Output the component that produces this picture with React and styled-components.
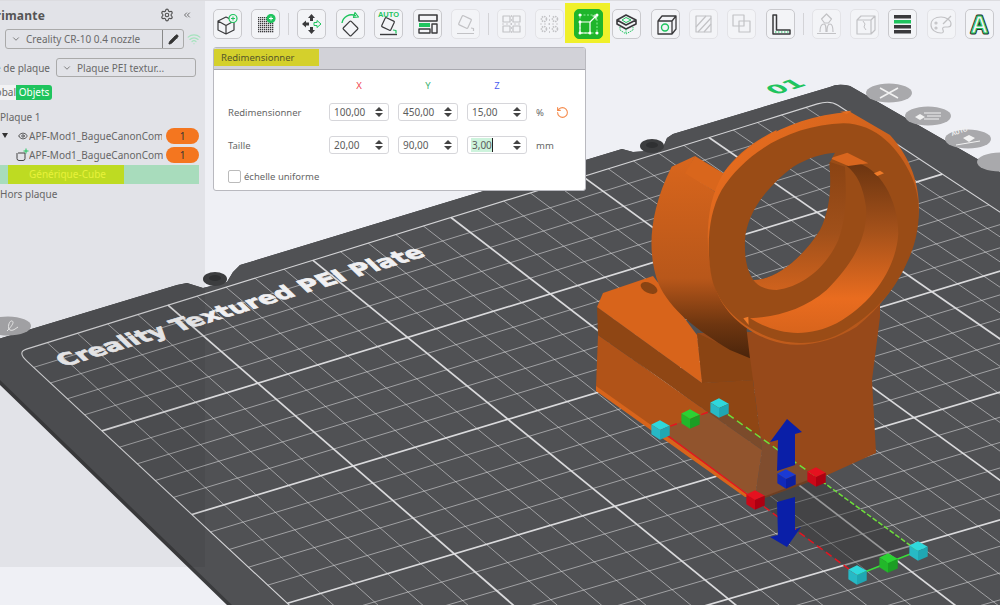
import React from "react";
import styled, { createGlobalStyle } from "styled-components";
import { Settings, ChevronsLeft, ChevronDown, Pencil, Wifi, Eye, RotateCcw } from "lucide-react";

const GREEN = "#1fc45e";

const GlobalStyle = createGlobalStyle`
  html, body {
    margin: 0;
    padding: 0;
    background: #eff0f5;
    overflow: hidden;
  }
  * { box-sizing: border-box; }
`;

const Page = styled.div`
  position: relative;
  width: 1000px;
  height: 605px;
  overflow: hidden;
  display: flex;
  align-items: flex-start;
  border-top: 1px solid #dcdce0;
  background: #eff0f5;
  font-family: "Noto Sans", "Liberation Sans", sans-serif;
  font-size: 10px;
  color: #666;
`;

const SceneSvg = styled.svg`
  position: absolute;
  left: 0;
  top: -1px;
  width: 1000px;
  height: 605px;
`;

const Sidebar = styled.aside`
  position: relative;
  flex: 0 0 205px;
  height: 566px;
  background: rgba(0, 0, 0, 0.05);
  overflow: hidden;
`;

const SideHeader = styled.div`
  display: flex;
  align-items: center;
  height: 28px;
  color: #555;
`;

const Clipped = styled.div`
  display: flex;
  justify-content: flex-end;
  flex: 0 0 ${(p) => p.$w}px;
  overflow: hidden;
  white-space: nowrap;
`;

const Title = styled(Clipped)`
  font-size: 12px;
  font-weight: 700;
  letter-spacing: 0.2px;
  color: #555;
`;

const HeaderTools = styled.div`
  margin-left: 115px;
  display: flex;
  align-items: center;
  gap: 8px;
`;

const PrinterRow = styled.div`
  display: flex;
  align-items: center;
  margin-left: 5px;
  height: 20px;
`;

const Combo = styled.div`
  display: flex;
  align-items: center;
  height: 100%;
  width: ${(p) => p.$w}px;
  border: 1px solid #aaa;
  border-radius: 3px;
  padding-left: 5px;
  gap: 5px;
  white-space: nowrap;
  color: #6a6a6a;
`;

const EditButton = styled.div`
  margin-left: auto;
  width: 21px;
  height: 100%;
  border-left: 1px solid #888;
  display: flex;
  align-items: center;
  justify-content: center;
  color: #333;
`;

const WifiMark = styled(Wifi)`
  margin-left: 3px;
  color: #a5e3bd;
`;

const PlateRow = styled.div`
  display: flex;
  align-items: center;
  gap: 6px;
  margin-top: 9px;
  height: 19px;
`;

const Tabs = styled.div`
  display: flex;
  margin-top: 8px;
  height: 15px;
  width: 52px;
  line-height: 15px;
`;

const TabGlobal = styled(Clipped)`
  background: #f2f2f4;
`;

const TabActive = styled.div`
  flex: 1;
  background: #1fc45e;
  color: #fff;
  text-align: center;
  border-radius: 0 3px 3px 0;
`;

const Tree = styled.div`
  margin-top: 7px;
`;

const TreeRow = styled.div`
  position: relative;
  display: flex;
  align-items: center;
  height: 19.25px;
  width: 199px;
  padding-left: ${(p) => p.$indent || 0}px;
  background: ${(p) => (p.$selected ? "#a8dcbc" : "transparent")};
  white-space: nowrap;
`;

const Marker = styled.span`
  position: absolute;
  left: 8px;
  top: 0;
  width: 116px;
  height: 100%;
  background: #bedb22;
`;

const TreeName = styled.span`
  position: relative;
  flex: none;
  width: ${(p) => p.$w || 133}px;
  overflow: hidden;
  color: ${(p) => p.$color || "#666"};
`;

const Badge = styled.span`
  margin-left: auto;
  width: 33px;
  height: 16px;
  line-height: 16px;
  border-radius: 8px;
  background: #f4761f;
  color: #333;
  text-align: center;
`;

const Caret = styled.span`
  margin: 0 10px 0 2px;
  width: 0;
  height: 0;
  border-left: 3px solid transparent;
  border-right: 3px solid transparent;
  border-top: 5px solid #333;
`;

const Main = styled.main`
  position: relative;
  flex: 1;
  min-width: 0;
`;

const Toolbar = styled.div`
  display: flex;
  align-items: center;
  gap: 9.4px;
  padding: 7px 0 0 8px;
  height: 38px;
  isolation: isolate;
`;

const Separator = styled.span`
  flex: 0 0 1px;
  height: 22px;
  margin: 0 -1.4px;
  background: #d3d3d7;
`;

const ToolButton = styled.div`
  position: relative;
  flex: 0 0 29px;
  height: 30px;
  border-radius: 5px;
  border: 1px solid ${(p) => (p.$active ? "#1fb52b" : p.$muted ? "#e3e3e7" : "#c9c9cd")};
  background: ${(p) => (p.$active ? "#1fb52b" : "#f3f4f7")};
  color: ${(p) => (p.$active ? "#fff" : p.$muted ? "#c2c2c5" : "#3a3a3c")};
  svg { display: block; margin: -1px; }
  ${(p) =>
    p.$active &&
    `&::before {
      content: "";
      position: absolute;
      left: -10px;
      right: -8px;
      top: -7px;
      bottom: -5px;
      background: #f0f02a;
      z-index: -1;
    }`}
`;

const Panel = styled.section`
  margin: 8px 0 0 8px;
  width: 373px;
  height: 144px;
  background: #fff;
  border: 1px solid #b9b9bf;
  border-radius: 3px;
  overflow: hidden;
  font-size: 9.5px;
`;

const PanelHeader = styled.div`
  height: 22px;
  background: #d2d2d8;
  border-bottom: 1px solid #a9a9b0;
  padding-top: 1px;
`;

const PanelTitle = styled.div`
  width: 105px;
  height: 17px;
  line-height: 17px;
  padding-left: 7px;
  background: #d4d02c;
  color: #55552a;
`;

const PanelGrid = styled.div`
  display: grid;
  grid-template-columns: 92px 60px 60px 60px 17px 20px;
  column-gap: 9px;
  row-gap: 15px;
  align-items: center;
  padding: 14px 0 0 14px;
`;

const Axis = styled.div`
  text-align: center;
  color: ${(p) => p.$color};
  height: 4px;
  line-height: 4px;
`;

const FieldLabel = styled.div`
  color: #666;
`;

const Field = styled.div`
  display: flex;
  align-items: center;
  justify-content: space-between;
  height: 18px;
  padding: 0 4px;
  border: 1px solid #d6d6da;
  border-radius: 3px;
  color: #5c5c5c;
  font-size: 10px;
`;

const Spinner = styled.span`
  display: flex;
  flex-direction: column;
  gap: 2px;
  margin-right: 1px;
  &::before, &::after {
    content: "";
    width: 0;
    height: 0;
    border-left: 4px solid transparent;
    border-right: 4px solid transparent;
  }
  &::before { border-bottom: 4px solid #444; }
  &::after { border-top: 4px solid #444; }
`;

const Selected = styled.span`
  background: #cdf3dc;
  border-right: 1px solid #222;
  margin-left: -1px;
  padding-left: 1px;
`;

const Unit = styled.div`
  color: #666;
  white-space: nowrap;
`;

const ResetIcon = styled(RotateCcw)`
  margin-left: -6px;
  color: #f58b4c;
`;

const Uniform = styled.label`
  display: flex;
  align-items: center;
  gap: 3px;
  margin: 16px 0 0 14px;
  color: #666;
`;

const CheckBox = styled.span`
  width: 13px;
  height: 13px;
  border: 1px solid #bbb;
  border-radius: 2px;
  background: #fff;
`;

// --- toolbar glyphs, drawn in a 29x30 box ---
const Glyph = ({ children }) => (
  <svg width="29" height="30" viewBox="0 0 29 30" fill="none" stroke="currentColor" strokeWidth="1.2" strokeLinejoin="round">
    {children}
  </svg>
);

const PlusDot = ({ filled }) => (
  <g>
    <circle cx="20" cy="9.5" r="4" fill={filled ? GREEN : "#f3f4f7"} stroke={GREEN} />
    <path d="M18 9.5h4M20 7.5v4" stroke={filled ? "#fff" : GREEN} strokeWidth="1" />
  </g>
);

const GridFill = () => {
  const bars = [8.5, 10.5, 12.5, 14.5, 16.5, 18.5, 20.5, 22.5];
  return (
    <g>
      <rect x="7" y="8" width="16" height="16" fill="#3a3a3c" stroke="none" />
      {bars.map((b) => (
        <path key={b} d={`M${b} 8v16M7 ${b + 1}h16`} stroke="#f3f4f7" strokeWidth="0.7" />
      ))}
    </g>
  );
};

const tools = [
  { icon: <><path d="M5 12l8-4 8 4v9l-8 4-8-4zM5 12l8 4.5 8-4.5M13 16.5V25" /><PlusDot /></> },
  { icon: <><GridFill /><PlusDot filled /></> },
  { sep: true },
  { icon: <>
    <path d="M14.5 5l3.5 4h-2v3h-3V9h-2zM14.5 25l3.5-4h-2v-3h-3v3h-2zM5 15l4-3.5v2h3v3H9v2z" fill="currentColor" stroke="none" />
    <path d="M24 15l-4-3.5v2h-3v3h3v2z" fill="#f3f4f7" stroke={GREEN} strokeWidth="1" />
  </> },
  { icon: <>
    <rect x="9" y="14" width="11" height="11" rx="1" transform="rotate(45 14.5 19.5)" />
    <path d="M6 14a9.500 9.500 0 0 1 14-7" stroke={GREEN} strokeWidth="1.4" />
    <path d="M19 3.500l3.500 4.500-5 .5z" stroke={GREEN} />
  </> },
  { icon: <>
    <text x="14.5" y="7.5" fontSize="7.500" fontWeight="700" textAnchor="middle" fill={GREEN} stroke="none" fontFamily="Liberation Sans">AUTO</text>
    <rect x="9" y="10" width="10" height="10" rx="1" transform="rotate(25 14 15)" />
    <path d="M6 25.500h17" strokeWidth="1.4" />
    <path d="M19 21l3 .5v3" stroke={GREEN} />
  </> },
  { icon: <>
    <rect x="6" y="6" width="18" height="6" strokeWidth="1.6" />
    <rect x="6" y="14" width="11" height="4" fill={GREEN} stroke="none" />
    <rect x="6" y="20" width="11" height="4" strokeWidth="1.4" />
    <rect x="19" y="15" width="5" height="9" strokeWidth="1.4" />
  </> },
  { muted: true, icon: <>
    <rect x="9" y="8" width="10" height="10" rx="1" transform="rotate(25 14 13)" />
    <path d="M6 24.500h17M20 19l2.500 .5v2.500" />
  </> },
  { sep: true },
  { muted: true, icon: <>
    <rect x="6" y="7" width="7" height="6" /><rect x="16" y="7" width="7" height="6" />
    <rect x="6" y="17" width="7" height="6" /><rect x="16" y="17" width="7" height="6" />
    <path d="M14.500 6v18M5 15h19" strokeDasharray="2 2" strokeWidth="0.8" />
  </> },
  { muted: true, icon: <>
    {[[9, 10], [20, 10], [9, 20], [20, 20]].map(([x, y]) => (
      <circle key={`${x}-${y}`} cx={x} cy={y} r="2.500" strokeWidth="1.6" strokeDasharray="1.500 .8" />
    ))}
    <path d="M14.500 6v18M5 15h19" strokeDasharray="2 2" strokeWidth="0.8" />
  </> },
  { active: true, icon: <>
    <rect x="6" y="6" width="17" height="18" stroke="#8ff09a" strokeDasharray="2 1.500" strokeWidth="1" />
    <rect x="6" y="13" width="10" height="11" stroke="#fff" />
    <path d="M16 13l6-6M18.500 7H22v3.500" stroke="#fff" />
    {[[6, 6], [23, 6], [6, 24], [23, 24], [16, 24], [6, 13]].map(([x, y]) => (
      <circle key={`${x}-${y}`} cx={x} cy={y} r="1.500" fill="#fff" stroke="none" />
    ))}
  </> },
  { icon: <>
    <path d="M5 11l9-5 10 5-10 5zM5 11v4l9 5 10-5v-4" strokeWidth="1.6" />
    <path d="M10 11l4-2.500 5 2.500-5 2.500z" stroke={GREEN} strokeWidth="1" />
    <path d="M8 18v3l6 4 7-4v-3M14 20v5" stroke={GREEN} strokeDasharray="1.500 1" strokeWidth="1" />
  </> },
  { icon: <>
    <path d="M7 12h14v13H7zM7 12l4-5h14l-4 5M21 25l4-5V7" strokeWidth="1.3" />
    <circle cx="14" cy="18.500" r="3.500" stroke={GREEN} strokeWidth="1.4" />
  </> },
  { muted: true, icon: <>
    <rect x="7" y="7" width="15" height="16" />
    <path d="M7 18l10-11M9 23L22 9M15 23l7-8" />
  </> },
  { muted: true, icon: <>
    <rect x="6" y="6" width="11" height="11" /><rect x="12" y="12" width="11" height="11" />
  </> },
  { icon: <>
    <path d="M7 6h3.500v15H24v4H7z" strokeWidth="1.500" />
    <path d="M9 23h14" stroke={GREEN} strokeDasharray="1.500 1.500" strokeWidth="1.200" />
  </> },
  { sep: true },
  { muted: true, icon: <>
    <path d="M14.500 5l5 5-3 4h-4l-3-4z" />
    <path d="M8 23c0-6 2-8 4-8s2 3 2 8M15 23c0-5 1-8 3-8s3 3 3 8M5 24.500h19" />
  </> },
  { muted: true, icon: <>
    <path d="M7 11h14v14H7zM7 11l4-4h14l-4 4M21 25l4-4V7" />
    <path d="M13 12l2 3-1 3 2 3" strokeWidth="1" />
  </> },
  { icon: <>
    <rect x="6" y="6" width="17" height="3.500" fill="currentColor" stroke="none" />
    <rect x="6" y="11" width="17" height="3.500" fill={GREEN} stroke="none" />
    <rect x="6" y="16" width="17" height="3.500" fill="currentColor" stroke="none" />
    <rect x="6" y="21" width="17" height="3.500" fill="currentColor" stroke="none" />
  </> },
  { muted: true, icon: <>
    <path d="M14 8c-6 0-10 3-10 8s5 8 10 8c2 0 3-1 2-3s0-3 2-3h3c2 0 3-1 3-3 0-4-5-7-10-7z" />
    <path d="M16 15l8-8" />
    <circle cx="9" cy="14" r="1" /><circle cx="9" cy="19" r="1" />
  </> },
  { icon: <>
    <text x="14.500" y="24" fontSize="24" fontWeight="700" textAnchor="middle" fontFamily="Liberation Sans" fill="#f3f4f7" stroke="#2c2c2e" strokeWidth="3" paintOrder="stroke">A</text>
    <text x="14.500" y="24" fontSize="24" fontWeight="700" textAnchor="middle" fontFamily="Liberation Sans" fill="#f3f4f7" stroke={GREEN} strokeWidth="1">A</text>
  </> },
];

// --- build plate maths ---
const homography = ([x0, y0], [x1, y1], [x2, y2], [x3, y3]) => {
  const dx1 = x1 - x2, dx2 = x3 - x2, sx = x0 - x1 + x2 - x3;
  const dy1 = y1 - y2, dy2 = y3 - y2, sy = y0 - y1 + y2 - y3;
  const den = dx1 * dy2 - dx2 * dy1;
  const g = (sx * dy2 - dx2 * sy) / den;
  const h = (dx1 * sy - sx * dy1) / den;
  const a = x1 - x0 + g * x1, b = x3 - x0 + h * x3;
  const d = y1 - y0 + g * y1, e = y3 - y0 + h * y3;
  return (u, v) => {
    const w = g * u + h * v + 1;
    return [(a * u + b * v + x0) / w, (d * u + e * v + y0) / w];
  };
};

const toPlate = homography([17, 352], [830, 100], [1623, 623], [613, 906]);
const P = (u, v) => toPlate(u, v).map((n) => n.toFixed(1)).join(" ");

// where the thick column lines meet the top of the frame, read off the picture
const COLUMN_STOPS = [17, 168, 313, 451, 583, 709, 830];

const columnU = (i) => {
  const m = Math.min(Math.floor(i / 5), 5);
  const target = COLUMN_STOPS[m] + ((COLUMN_STOPS[m + 1] - COLUMN_STOPS[m]) * (i - m * 5)) / 5;
  let lo = 0, hi = 1;
  for (let n = 0; n < 24; n++) {
    const mid = (lo + hi) / 2;
    if (toPlate(mid, 0)[0] < target) lo = mid;
    else hi = mid;
  }
  return lo;
};

const gridCount = 30;
const gridIds = Array.from({ length: gridCount - 1 }, (_, i) => i + 1);

const framePath = `M${P(0, 0.02)} Q${P(0, 0)} ${P(0.012, 0)} L${P(0.985, 0)} Q${P(1, 0)} ${P(1, 0.012)} L${P(1, 1)} L${P(0, 1)} Z`;

const PLATE = "M-45 352 L177 285 L187 283 L203 288 L227 282 L233 272 L240 265 L622 149 L633 152 L662 150 L667 138 L673 134 L830 87 Q838 83 850 86 L1000 172 L1000 605 L227 605 L0 385 Z";

const PlateGrid = () => (
  <g fill="none" stroke="#e2e2e4">
    {gridIds.map((i) => {
      const major = i % 5 === 0;
      const u = columnU(i);
      return (
        <g key={i} strokeWidth={major ? 1.7 : 0.9} strokeOpacity={major ? 0.95 : 0.62}>
          <path d={`M${P(u, 0)} L${P(u, 1)}`} />
          <path d={`M${P(0, i / gridCount)} L${P(1, i / gridCount)}`} />
        </g>
      );
    })}
    <path d={framePath} strokeWidth="1.100" strokeOpacity="0.9" />
  </g>
);

const CUBE_COLORS = {
  cyan: ["#2fd8dc", "#27b9c5", "#1fa7b3"],
  green: ["#2bd233", "#22b82a", "#1c9e24"],
  red: ["#e5111f", "#cc0818", "#ad0012"],
  blue: ["#1a3ad4", "#1029ba", "#0c1fa0"],
};

const Cube = ({ x, y, tone }) => {
  const [top, left, right] = CUBE_COLORS[tone];
  return (
    <g transform={`translate(${x} ${y}) scale(1.08)`}>
      <polygon points="-8,-5 0,-9 9,-4 0,0" fill={top} />
      <polygon points="-8,-5 0,0 0,9 -8,4" fill={left} />
      <polygon points="0,0 9,-4 9,5 0,9" fill={right} />
    </g>
  );
};

const PlateButton = ({ x, y, children }) => (
  <g transform={`translate(${x} ${y})`}>
    <ellipse rx="23" ry="9.500" fill="#a9a9ac" />
    {children}
  </g>
);

const Scene = () => (
  <SceneSvg viewBox="0 0 1000 605">
    <defs>
      <linearGradient id="cyl" x1="0" y1="0" x2="0" y2="1">
        <stop offset="0" stopColor="#e0691d" />
        <stop offset="0.65" stopColor="#b8571a" />
        <stop offset="0.85" stopColor="#6e3610" />
        <stop offset="1" stopColor="#4a240b" />
      </linearGradient>
      <linearGradient id="chamfer" x1="0" y1="0" x2="1" y2="1">
        <stop offset="0" stopColor="#f0701f" />
        <stop offset="1" stopColor="#a9521a" />
      </linearGradient>
      <linearGradient id="recess" x1="0" y1="0" x2="0" y2="1">
        <stop offset="0" stopColor="#6a3410" />
        <stop offset="0.4" stopColor="#a4511a" />
        <stop offset="0.8" stopColor="#e96c1f" />
        <stop offset="1" stopColor="#d8641c" />
      </linearGradient>
      <linearGradient id="tube" x1="0" y1="0" x2="0" y2="1">
        <stop offset="0" stopColor="#8a4313" />
        <stop offset="0.55" stopColor="#a0501a" />
        <stop offset="1" stopColor="#cf621d" />
      </linearGradient>
      <clipPath id="hole-clip">
        <path transform="translate(590 60) scale(.3333)" d="M465 540 C470 460 530 380 610 320 C650 295 700 280 735 278 L718 310 C725 380 720 450 690 510 C640 590 560 660 490 660 C470 630 463 590 465 540Z" />
      </clipPath>
    </defs>

    <path d={PLATE} fill="#3b3c3e" />
    <path d="M-45 352 L177 285 L187 283 L203 288 L227 282 L233 272 L240 265 L622 149 L633 152 L662 150 L667 138 L673 134 L830 87 Q838 83 850 86 L1000 172 L1000 605 L232 605 L0 380 Z" fill="#505154" />
    <PlateGrid />

    <ellipse cx="215" cy="279" rx="12" ry="7" fill="#3c3d3f" />
    <ellipse cx="215" cy="278" rx="6" ry="3" fill="#2f3032" />
    <ellipse cx="652" cy="146" rx="12" ry="7" fill="#3c3d3f" />
    <ellipse cx="652" cy="145" rx="6" ry="3" fill="#2f3032" />

    <text transform="matrix(.955 -.293 .62 .6 64 367)" fontFamily="DejaVu Sans" fontWeight="700" fontSize="25" fill="#f0f0f2" stroke="#f0f0f2" strokeWidth="0.9" textLength="380" lengthAdjust="spacingAndGlyphs">Creality Textured PEI Plate</text>
    <text transform="matrix(.955 -.293 .75 .45 775 95)" fontFamily="DejaVu Sans" fontWeight="700" fontSize="22" fill={GREEN} textLength="34" lengthAdjust="spacingAndGlyphs">01</text>

    <PlateButton x={889} y={93}>
      <path d="M-9 -5L9 5M-9 5L9 -5" stroke="#f2f2f2" strokeWidth="1.600" />
    </PlateButton>
    <PlateButton x={928} y={116}>
      <path d="M-4 -3H13M-1 0H13M-4 3H11" stroke="#f2f2f2" strokeWidth="1.200" />
      <path d="M-13 1l5-3 5 3-5 3z" fill="#f2f2f2" />
    </PlateButton>
    <PlateButton x={968} y={139}>
      <path d="M-5 -1l6-3 6 3-6 4z" fill="#f2f2f2" />
      <path d="M-12 6L12 2" stroke="#f2f2f2" />
      <text x="-16" y="-3" fontSize="6" fontWeight="700" fill="#f2f2f2" fontFamily="Liberation Sans" transform="rotate(-18 -16 -3)">AUTO</text>
    </PlateButton>
    <PlateButton x={1000} y={162} />
    <PlateButton x={8} y={326}>
      <path d="M-1 5c4-4 8-9 5-10s-5 8-2 9 5-1 8-3" stroke="#f2f2f2" fill="none" />
    </PlateButton>

    {/* base of the part */}
    <polygon points="697,333 850,330 880,300 880,317 872,380 876,453 823,477 765,498 755,497 762,450 753,380 702,383" fill="#97491a" />
    <polygon points="598,335 762,450 755,497 747,493 596,387" fill="#b15318" />
    <polygon points="596,386 747,493 755,497 745,497 596,391" fill="#d8641b" />
    <polygon points="597,307 702,383 753,380 762,450 598,335" fill="#8f4614" />
    <polygon points="697,333 750,358 753,380 702,383" fill="#8a4413" />
    <polygon points="597,307 603,293 653,276 697,335 702,383" fill="#d8641b" />
    <ellipse cx="649" cy="288" rx="9" ry="5" transform="rotate(25 649 288)" fill="#8a4413" />

    {/* ring, drawn in zoom coordinates */}
    <g transform="translate(590 60) scale(.3333)">
      <path d="M245 320 L315 288 L290 340 L380 398 L400 340 C440 280 500 240 560 210 L470 810 L480 895 L420 870 C320 810 240 750 205 670 C175 590 170 470 245 320Z" fill="url(#cyl)" />
      <path d="M315 288 L400 340 L380 398 L285 340Z" fill="#d9661c" />
      <path d="M400 340 C470 250 600 170 780 155 L900 225 C960 290 995 380 985 470 C975 600 900 720 800 800 C720 850 620 870 540 840 C470 815 400 760 375 680 C345 580 340 440 400 340Z" fill="url(#chamfer)" />
      <path d="M395 390 C470 270 610 195 760 190 C860 190 930 270 965 350 C1000 430 990 530 950 610 C910 700 850 760 770 810 C690 860 590 860 510 820 C430 780 370 720 360 620 C350 540 360 450 395 390Z" fill="#9a4c16" />
      <path d="M790 305 C870 320 925 420 925 520 C920 620 850 730 740 790 C650 835 560 825 480 775 C560 770 640 750 710 690 C790 610 835 530 828 440 C820 380 800 340 770 318Z" fill="url(#recess)" />
      <path d="M718 305 L765 320 C770 400 770 470 745 540 C710 620 640 680 560 690 C530 690 505 680 490 660 C560 660 640 590 690 510 C720 450 725 380 718 305Z" fill="url(#tube)" />
      <path d="M720 295 L772 278 L835 310 L775 318Z" fill="#d9661e" />
      <path d="M852 340 L870 332 L882 340 L862 348Z" fill="#ee7a28" />
      <path d="M460 775 L475 770 L476 795Z" fill="#ee7a28" />
      <path d="M750 155 L785 152 L770 162Z" fill="#e56d20" />
    </g>
    <g clipPath="url(#hole-clip)">
      <path d={PLATE} fill="#505154" />
      <PlateGrid />
    </g>

    {/* scale handles */}
    <polygon points="660,430 719,408 816,477 755,500" fill="#555" fillOpacity="0.35" />
    <polygon points="755,500 816,477 918,551 857,575" fill="#333" fillOpacity="0.4" />
    <g fill="none" strokeWidth="1.500">
      <path d="M660 430 L755 500" stroke="#e5141f" />
      <path d="M755 500 L857 575 M660 430 L719 408" stroke="#e5141f" strokeDasharray="7 4" />
      <path d="M719 408 L816 477" stroke="#6ee03a" strokeDasharray="7 4" />
      <path d="M816 477 L918 551" stroke="#6ee03a" strokeDasharray="5 2" />
      <path d="M857 575 L918 551" stroke="#3bdc3a" />
    </g>
    <polygon points="787,419 802,432 795,434 795,465 777,471 778,440 770,442" fill="#0a1fa8" />
    <polygon points="777,502 795,497 795,530 801,527 787,547 770,537 778,535" fill="#0a1fa8" />
    <Cube x={660} y={430} tone="cyan" />
    <Cube x={719} y={408} tone="cyan" />
    <Cube x={857} y={575} tone="cyan" />
    <Cube x={918} y={551} tone="cyan" />
    <Cube x={690} y={419} tone="green" />
    <Cube x={888} y={563} tone="green" />
    <Cube x={755} y={500} tone="red" />
    <Cube x={816} y={477} tone="red" />
    <Cube x={786} y={479} tone="blue" />
  </SceneSvg>
);

const ObjectIcon = ({ plus }) => (
  <svg width="14" height="14" viewBox="0 0 14 14" fill="none" style={{ flex: "none" }}>
    <path d="M2 5v5.500a2 2 0 0 0 2 2h4a2 2 0 0 0 2-2V5H3" stroke="#444" />
    {plus ? <path d="M11 .5v5M8.500 3h5" stroke={GREEN} /> : <path d="M10 5h4" stroke="#444" />}
  </svg>
);

const App = () => (
  <Page>
    <GlobalStyle />
    <Scene />
    <Sidebar>
      <SideHeader>
        <Title $w={45}>Imprimante</Title>
        <HeaderTools>
          <Settings size={14} />
          <ChevronsLeft size={10} />
        </HeaderTools>
      </SideHeader>
      <PrinterRow>
        <Combo $w={179}>
          <ChevronDown size={10} />
          Creality CR-10 0.4 nozzle
          <EditButton>
            <Pencil size={11} fill="#333" />
          </EditButton>
        </Combo>
        <WifiMark size={14} />
      </PrinterRow>
      <PlateRow>
        <Clipped $w={50}>Type de plaque</Clipped>
        <Combo $w={140}>
          <ChevronDown size={10} />
          Plaque PEI textur...
        </Combo>
      </PlateRow>
      <Tabs>
        <TabGlobal $w={16}>Global</TabGlobal>
        <TabActive>Objets</TabActive>
      </Tabs>
      <Tree>
        <TreeRow>Plaque 1</TreeRow>
        <TreeRow>
          <Caret />
          <Eye size={10} color="#444" style={{ marginRight: 1 }} />
          <TreeName>APF-Mod1_BagueCanonComb</TreeName>
          <Badge>1</Badge>
        </TreeRow>
        <TreeRow $indent={15}>
          <ObjectIcon plus />
          <TreeName $w={134}>APF-Mod1_BagueCanonComb</TreeName>
          <Badge>1</Badge>
        </TreeRow>
        <TreeRow $indent={15} $selected>
          <Marker />
          <ObjectIcon />
          <TreeName $color="#e8f23a">Générique-Cube</TreeName>
        </TreeRow>
        <TreeRow>Hors plaque</TreeRow>
      </Tree>
    </Sidebar>
    <Main>
      <Toolbar>
        {tools.map((tool, i) =>
          tool.sep ? (
            <Separator key={i} />
          ) : (
            <ToolButton key={i} $muted={tool.muted} $active={tool.active}>
              <Glyph>{tool.icon}</Glyph>
            </ToolButton>
          )
        )}
      </Toolbar>
      <Panel>
        <PanelHeader>
          <PanelTitle>Redimensionner</PanelTitle>
        </PanelHeader>
        <PanelGrid>
          <span />
          <Axis $color="#f0474f">X</Axis>
          <Axis $color="#3cb371">Y</Axis>
          <Axis $color="#4a5cf0">Z</Axis>
          <span />
          <span />
          <FieldLabel>Redimensionner</FieldLabel>
          <Field>100,00<Spinner /></Field>
          <Field>450,00<Spinner /></Field>
          <Field>15,00<Spinner /></Field>
          <Unit>%</Unit>
          <ResetIcon size={13} />
          <FieldLabel>Taille</FieldLabel>
          <Field>20,00<Spinner /></Field>
          <Field>90,00<Spinner /></Field>
          <Field><Selected>3,00</Selected><Spinner /></Field>
          <Unit>mm</Unit>
          <span />
        </PanelGrid>
        <Uniform>
          <CheckBox />
          échelle uniforme
        </Uniform>
      </Panel>
    </Main>
  </Page>
);

export default App;
